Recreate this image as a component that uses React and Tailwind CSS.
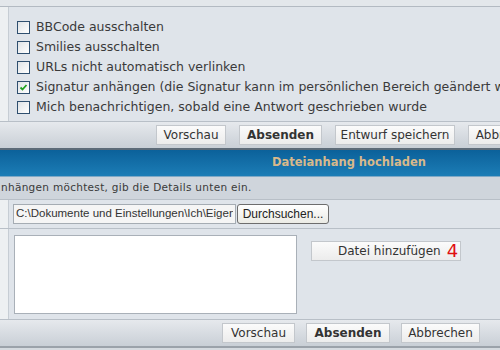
import React from "react";

const font = { fontFamily: '"DejaVu Sans", Verdana, sans-serif' };

function Box({ checked }) {
  return (
    <span className="relative inline-block w-[13px] h-[13px] border border-[#2f4f6f] bg-gradient-to-br from-[#dfe3e6] to-[#ffffff] shrink-0">
      {checked && (
        <svg className="absolute left-0 top-0" width="11" height="11" viewBox="0 0 11 11">
          <path d="M2.5 5.5 L4.5 7.5 L8.5 3" stroke="#21a121" strokeWidth="1.8" fill="none" />
        </svg>
      )}
    </span>
  );
}

function Btn({ children, w, bold }) {
  return (
    <div
      className={`h-[20px] ${w} shrink-0 flex items-center justify-center border border-[#c3c7cc] bg-gradient-to-b from-[#fbfbfb] to-[#ececec] text-[12px] text-[#333] ${bold ? "font-bold" : ""}`}
      style={font}
    >
      {children}
    </div>
  );
}

const opts = [
  ["BBCode ausschalten", false],
  ["Smilies ausschalten", false],
  ["URLs nicht automatisch verlinken", false],
  ["Signatur anhängen (die Signatur kann im persönlichen Bereich geändert werden)", true],
  ["Mich benachrichtigen, sobald eine Antwort geschrieben wurde", false],
];

export default function App() {
  return (
    <div className="w-[500px] h-[350px] overflow-hidden bg-[#dfe4ea]" style={font}>
      <div className="h-[7px] bg-[#e3e7eb] border-b border-[#b3bac2]" />
      <div className="flex h-[115px] border-b border-[#b8bfc7]">
        <div className="w-[9px] bg-[#edf0f2] border-r border-[#c6cdd4]" />
        <div className="flex-1 bg-[#dfe4ea] pt-[10px] pl-[8px] min-w-0 overflow-hidden">
          {opts.map(([t, c]) => (
            <div key={t} className="h-[20px] flex items-center gap-[6px] whitespace-nowrap">
              <Box checked={c} />
              <span className="text-[12.5px] text-[#3a3a3a]">{t}</span>
            </div>
          ))}
        </div>
      </div>
      <div className="h-[26px] bg-gradient-to-b from-[#e6e9ed] to-[#c9cfd6] flex items-center pl-[156px] gap-[13px] overflow-hidden">
        <Btn w="w-[70px]">Vorschau</Btn>
        <Btn w="w-[83px]" bold>Absenden</Btn>
        <Btn w="w-[120px]">Entwurf speichern</Btn>
        <Btn w="w-[80px]">Abbrechen</Btn>
      </div>
      <div className="h-[2px] bg-[#5d6b78]" />
      <div className="h-[27px] bg-gradient-to-b from-[#0b619a] to-[#1c7db6] border-b border-[#7fa9c6] flex items-center pl-[272px]">
        <span className="text-[11.5px] font-bold text-[#d9b98b] whitespace-nowrap">Dateianhang hochladen</span>
      </div>
      <div className="h-[23px] bg-[#cfd5dc] border-b border-[#b8bfc7] flex items-center pl-[1px]">
        <span className="text-[10.5px] tracking-[0.3px] text-[#3a3a3a] whitespace-nowrap">nhängen möchtest, gib die Details unten ein.</span>
      </div>
      <div className="flex h-[29px] border-b border-[#b8bfc7]">
        <div className="w-[9px] bg-[#edf0f2] border-r border-[#c6cdd4]" />
        <div className="flex-1 flex items-center pl-[4px] gap-[1px]">
          <div
            className="w-[223px] h-[20px] border border-[#a5acb3] bg-[#f5f5f5] text-[11.5px] text-[#333] px-[2px] flex items-center overflow-hidden whitespace-nowrap"
            style={{ fontFamily: '"Liberation Sans", Arial, sans-serif' }}
          >
            <span className="block w-[217px] overflow-hidden">C:\Dokumente und Einstellungen\Ich\Eigene D</span>
          </div>
          <div
            className="w-[92px] h-[20px] border border-[#6d6d6d] rounded-[3px] bg-gradient-to-b from-[#ffffff] to-[#ebebe5] text-[12px] text-[#222] flex items-center justify-center"
            style={{ fontFamily: '"Liberation Sans", Arial, sans-serif' }}
          >
            Durchsuchen...
          </div>
        </div>
      </div>
      <div className="flex h-[91px] border-b border-[#b8bfc7]">
        <div className="w-[9px] bg-[#edf0f2] border-r border-[#c6cdd4]" />
        <div className="flex-1 flex items-start pl-[5px] pt-[6px]">
          <div className="w-[283px] h-[79px] bg-white border border-[#a9b0b8]" />
          <div className="ml-[14px] mt-[6px] w-[150px] h-[20px] border border-[#c3c7cc] bg-gradient-to-b from-[#fbfbfb] to-[#ececec] flex items-center text-[12px] text-[#333] gap-[6px] pl-[26px]">
            <span>Datei hinzufügen</span>
            <span className="text-[18px] leading-none text-[#e01010]" style={font}>4</span>
          </div>
        </div>
      </div>
      <div className="h-[26px] bg-gradient-to-b from-[#e6e9ed] to-[#c9cfd6] flex items-center pl-[222px] gap-[11px]">
        <Btn w="w-[73px]">Vorschau</Btn>
        <Btn w="w-[84px]" bold>Absenden</Btn>
        <Btn w="w-[79px]">Abbrechen</Btn>
      </div>
      <div className="h-[2px] bg-[#9ba2aa]" />
      <div className="h-[10px] bg-[#d5dadf]" />
    </div>
  );
}
